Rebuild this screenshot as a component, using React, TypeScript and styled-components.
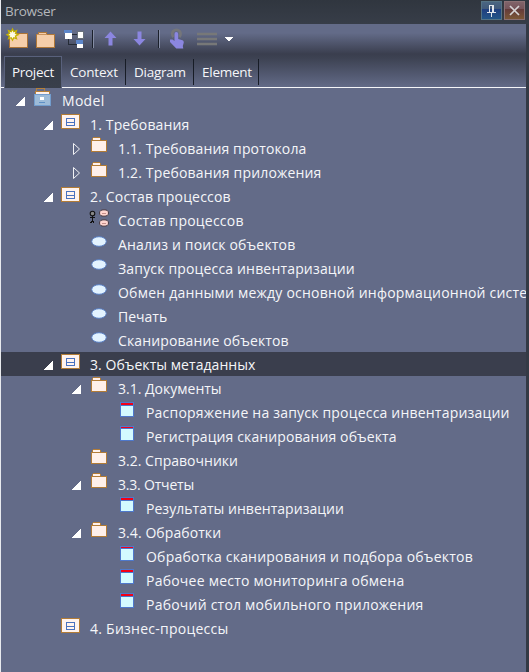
import React from 'react';
import styled, { createGlobalStyle } from 'styled-components';

const GlobalStyle = createGlobalStyle`
  * { box-sizing: border-box; }
  body { margin: 0; overflow: hidden; background: #303640; }
  svg { display: block; shape-rendering: crispEdges; flex: none; }
`;

const Panel = styled.div`
  width: 529px;
  height: 672px;
  display: flex;
  flex-direction: column;
  overflow: hidden;
  border-left: 1px solid #e8eaee;
  background: #343a45;
  color: #f5f6f9;
  font-family: 'Open Sans', 'Noto Sans', sans-serif;
  font-size: 14px;
`;

const TitleBar = styled.header`
  height: 24px;
  flex: none;
  display: flex;
  align-items: flex-start;
  padding: 1px 4px 0 4px;
  background: linear-gradient(#30363f, #373d48);
`;

const Title = styled.span`
  flex: 1;
  color: #b4b7bc;
  font-size: 13.5px;
  line-height: 20px;
  letter-spacing: -0.25px;
`;

const CaptionButton = styled.button<{ $kind: 'pin' | 'close' }>`
  width: 21px;
  height: 19px;
  margin-left: 2px;
  padding: 0;
  border: 1px solid ${p => (p.$kind === 'pin' ? '#557385' : '#8b7074')};
  background: ${p =>
    p.$kind === 'pin'
      ? 'linear-gradient(#4a6582 0, #41597a 42%, #203f80 43%, #245587 100%)'
      : 'linear-gradient(#80636a 0, #755359 42%, #643a3a 43%, #7b5737 100%)'};
`;

const Workspace = styled.div`
  width: 525px;
  flex: 1;
  overflow: hidden;
  background: #636b88;
`;

const Chrome = styled.div`
  height: 64px;
  display: flex;
  flex-direction: column;
  border-bottom: 1px solid #f4f5f8;
  background: linear-gradient(#636b88 0, #636b88 9px, #3a3e4e 30px, #3d4252 34px, #626a87 63px);
`;

const Toolbar = styled.div`
  height: 32px;
  flex: none;
  display: flex;
`;

const Tabs = styled.nav`
  height: 32px;
  flex: none;
  display: flex;
  padding-left: 3px;
`;

const Tab = styled.button<{ $width: number; $active?: boolean; $spacing: number }>`
  width: ${p => p.$width}px;
  height: ${p => (p.$active ? 32 : 26)}px;
  margin-top: ${p => (p.$active ? 0 : 3)}px;
  padding: ${p => (p.$active ? '0 0 2px 7px' : '0 0 1px 8px')};
  border: solid ${p => (p.$active ? '#59617c' : '#171c26')};
  border-width: ${p => (p.$active ? '1px 1px 0' : '0 1px 0 0')};
  background: ${p => (p.$active ? 'linear-gradient(#343a46, #393f4b)' : 'transparent')};
  color: #f5f6f9;
  font: inherit;
  font-size: 13.5px;
  letter-spacing: ${p => p.$spacing}px;
  text-align: left;
  white-space: nowrap;
`;

const Tree = styled.div`
  display: flex;
  flex-direction: column;
`;

const Row = styled.div<{ $level: number; $selected?: boolean }>`
  height: 24px;
  flex: none;
  display: flex;
  padding-left: ${p => 14 + 28 * p.$level}px;
  background: ${p => (p.$selected ? '#3a3e4d' : 'transparent')};
`;

const ArrowSlot = styled.span`
  width: 18px;
  height: 24px;
  flex: none;
`;

const IconSlot = styled.span<{ $shift: number }>`
  width: 29px;
  height: 24px;
  flex: none;
  padding-top: ${p => p.$shift}px;
`;

const Label = styled.span<{ $spacing: number }>`
  line-height: 25px;
  letter-spacing: ${p => p.$spacing}px;
  white-space: pre;
`;

const PinIcon = () => (
  <svg width="19" height="17">
    <path d="M7 3h5v7h2v1h-4v4H9v-4H5v-1h2zM8 4v6h2V4z" fill="#e0e4ea" fillRule="evenodd" />
  </svg>
);

const CloseIcon = () => (
  <svg width="19" height="17">
    <path d="M5 4l9 9M14 4l-9 9" stroke="#d6d4d6" strokeWidth="1.7" shapeRendering="auto" />
  </svg>
);

const ToolbarIcons = () => (
  <svg width="240" height="32">
    <path d="M8.500 9.500h18v14h-18z" fill="#f5ceaa" stroke="#ab7336" />
    <path d="M11.500 5l1.300 2.700 2.700-1-1 2.700 2.700 1.300-2.700 1.300 1 2.700-2.700-1-1.300 2.500-1.300-2.500-2.700 1 1-2.700-2.500-1.300 2.500-1.300-1-2.700 2.700 1z" fill="#fffbe4" stroke="#c4b000" strokeWidth="1.300" shapeRendering="auto" />
    <path d="M35.500 23.500v-13h2v-2h8v2h8v13z" fill="#f5ceaa" stroke="#b07839" />
    <path d="M36 10.500h10" stroke="#ca935e" />
    <path d="M67.500 14v6.500h8M71 10.500h5" stroke="#252b36" fill="none" />
    <path d="M64 7h7v8h-7zM76 7h6v7h-6zM76 17h6v7h-6z" fill="#fff" />
    <path d="M63 6h8v3h-8zM75 16h7v4h-7z" fill="#5d86ca" />
    <path d="M76 7h6v7h-6z" fill="none" stroke="#68707c" />
    <path d="M91.500 6v18M157.500 6v18" stroke="#1b202b" />
    <path d="M92.500 6v18M158.500 6v18" stroke="#858da5" />
    <path d="M109.500 7.500l6 6.500h-4v7.500h-4v-7.500h-4z" fill="#8b86e0" shapeRendering="auto" />
    <path d="M138.500 21.500l6-6.500h-4v-7.500h-4v7.500h-4z" fill="#8b86e0" shapeRendering="auto" />
    <path d="M172.500 13a4.200 4.200 0 1 1 5.800 0" fill="none" stroke="#75767a" strokeWidth="2.600" shapeRendering="auto" />
    <path d="M173.500 10q0-2 1.800-2t1.900 2v5l4.300 1.200q1.300.5 1.300 2.300l-1 3.500.5 2.500h-7l-6.300-6.500v-2.500h2.500l2 1.500z" fill="#8b86e0" shapeRendering="auto" />
    <path d="M196 8.800h20v2.500h-20zM196 13.800h20v2.500h-20zM196 18.700h20v2.500h-20z" fill="#777878" shapeRendering="auto" />
    <path d="M224 13h8v1h-8zM225 14h6v1h-6zM226 15h4v1h-4zM227 16h2v1h-2z" fill="#fff" />
  </svg>
);

type ArrowKind = 'open' | 'closed' | 'none';

const Arrow = ({ kind }: { kind: ArrowKind }) => (
  <svg width="18" height="24">
    {kind === 'open' && <path d="M10 8v10H0z" fill="#fff" />}
    {kind === 'closed' && <path d="M2.500 7.500v11l6-5.500z" fill="none" stroke="#f0f1f4" shapeRendering="auto" />}
  </svg>
);

type IconKind = 'model' | 'view' | 'folder' | 'diagram' | 'usecase' | 'class' | 'class-thin';

const NodeIcon = ({ kind }: { kind: IconKind }) => {
  switch (kind) {
    case 'model':
      return (
        <svg width="22" height="19">
          <path d="M2 3h14v4H2z" fill="#fff0ea" />
          <path d="M2.500 7V3.500h1V.500h8v3h5V7M3 3.500h9" fill="none" stroke="#b68039" />
          <path d="M1.500 6.500h16v11h-16z" fill="#9dbbd8" stroke="#729dce" />
          <path d="M7 9h4v3H7z" fill="#fff" />
          <path d="M6 14h6v1H6z" fill="#5f90c5" />
        </svg>
      );
    case 'view':
      return (
        <svg width="22" height="15">
          <path d="M.5.500h18v14H.5z" fill="#fff3ee" stroke="#b27c37" />
          <path d="M5.500 4.500h8v7h-8zM5.500 8h8" fill="none" stroke="#4972c0" />
        </svg>
      );
    case 'folder':
      return (
        <svg width="22" height="15">
          <path d="M4 1h8v3H4zM3 4h14v10H3z" fill="#fff0ea" />
          <path d="M2 3h16v1H2zM2 4h1v11H2zM17 4h1v11h-1zM3 14h14v1H3zM3 1h1v2H3zM4 0h7v1H4zM11 1h1v2h-1z" fill="#b27c37" />
        </svg>
      );
    case 'diagram':
      return (
        <svg width="22" height="19">
          <g fill="none" stroke="#111" strokeWidth="1.100">
            <circle cx="3.500" cy="4.500" r="2.300" fill="#888" shapeRendering="auto" />
            <path d="M3.500 7v5M1 8.500h5M3.500 11.500l-2 3M3.500 11.500l2 3" />
          </g>
          <g fill="#ffd5cf" stroke="#463a43" shapeRendering="auto">
            <ellipse cx="15" cy="4" rx="4.500" ry="3.200" />
            <ellipse cx="15" cy="14" rx="4.500" ry="3.200" />
          </g>
          <path d="M13 4.500h4M13 14.500h4" stroke="#c58f8a" />
        </svg>
      );
    case 'usecase':
      return (
        <svg width="22" height="11">
          <ellipse cx="10" cy="5.500" rx="7.300" ry="4.800" fill="#e3f3ff" stroke="#587fc4" shapeRendering="auto" />
        </svg>
      );
    default:
      return (
        <svg width="22" height="15">
          <path d="M3.500.500h13v14h-13z" fill="#d3faff" stroke="#4e78cc" />
          <path d={kind === 'class' ? 'M4 1h12v2H4z' : 'M4 1h12v1H4z'} fill="#f20017" />
          <path d={kind === 'class' ? 'M4 3.500h12' : 'M4 2.500h12'} stroke="#4e78cc" />
        </svg>
      );
  }
};

type TreeNode = {
  level: number;
  arrow: ArrowKind;
  icon: IconKind;
  shift: number;
  label: string;
  spacing: number;
  selected?: boolean;
};

const nodes: TreeNode[] = [
  { level: 0, arrow: 'open', icon: 'model', shift: 0, label: 'Model', spacing: 0.3 },
  { level: 1, arrow: 'open', icon: 'view', shift: 2, label: '1. Требования', spacing: 0.15 },
  { level: 2, arrow: 'closed', icon: 'folder', shift: 1, label: '1.1. Требования протокола', spacing: 0.14 },
  { level: 2, arrow: 'closed', icon: 'folder', shift: 2, label: '1.2. Требования приложения', spacing: 0.17 },
  { level: 1, arrow: 'open', icon: 'view', shift: 3, label: '2. Состав процессов', spacing: 0.17 },
  { level: 2, arrow: 'none', icon: 'diagram', shift: 1, label: 'Состав процессов', spacing: 0.22 },
  { level: 2, arrow: 'none', icon: 'usecase', shift: 4, label: 'Анализ и поиск объектов', spacing: 0.17 },
  { level: 2, arrow: 'none', icon: 'usecase', shift: 3, label: 'Запуск процесса инвентаризации', spacing: 0.17 },
  { level: 2, arrow: 'none', icon: 'usecase', shift: 4, label: 'Обмен данными между основной информационной систе', spacing: 0.22 },
  { level: 2, arrow: 'none', icon: 'usecase', shift: 4, label: 'Печать', spacing: 0 },
  { level: 2, arrow: 'none', icon: 'usecase', shift: 4, label: 'Сканирование объектов', spacing: 0.12 },
  { level: 1, arrow: 'open', icon: 'view', shift: 2, label: '3. Объекты метаданных', spacing: 0.05, selected: true },
  { level: 2, arrow: 'open', icon: 'folder', shift: 1, label: '3.1. Документы', spacing: 0 },
  { level: 3, arrow: 'none', icon: 'class', shift: 2, label: 'Распоряжение на запуск процесса инвентаризации', spacing: 0.2 },
  { level: 3, arrow: 'none', icon: 'class-thin', shift: 2, label: 'Регистрация сканирования объекта', spacing: 0.11 },
  { level: 2, arrow: 'none', icon: 'folder', shift: 1, label: '3.2. Справочники', spacing: 0.02 },
  { level: 2, arrow: 'open', icon: 'folder', shift: 1, label: '3.3. Отчеты', spacing: -0.2 },
  { level: 3, arrow: 'none', icon: 'class', shift: 1, label: 'Результаты инвентаризации', spacing: 0.03 },
  { level: 2, arrow: 'open', icon: 'folder', shift: 2, label: '3.4. Обработки', spacing: 0.08 },
  { level: 3, arrow: 'none', icon: 'class-thin', shift: 2, label: 'Обработка сканирования и подбора объектов', spacing: 0.22 },
  { level: 3, arrow: 'none', icon: 'class', shift: 1, label: 'Рабочее место мониторинга обмена', spacing: 0.23 },
  { level: 3, arrow: 'none', icon: 'class', shift: 1, label: 'Рабочий стол мобильного приложения', spacing: 0.22 },
  { level: 1, arrow: 'none', icon: 'view', shift: 2, label: '4. Бизнес-процессы', spacing: 0.25 },
];

export default function App() {
  return (
    <>
      <GlobalStyle />
      <Panel>
        <TitleBar>
          <Title>Browser</Title>
          <CaptionButton $kind="pin"><PinIcon /></CaptionButton>
          <CaptionButton $kind="close"><CloseIcon /></CaptionButton>
        </TitleBar>
        <Workspace>
          <Chrome>
            <Toolbar><ToolbarIcons /></Toolbar>
            <Tabs>
              <Tab $width={58} $active $spacing={-0.3}>Project</Tab>
              <Tab $width={64} $spacing={-0.2}>Context</Tab>
              <Tab $width={68} $spacing={-0.25}>Diagram</Tab>
              <Tab $width={65} $spacing={-0.25}>Element</Tab>
            </Tabs>
          </Chrome>
          <Tree>
            {nodes.map(n => (
              <Row key={n.label} $level={n.level} $selected={n.selected}>
                <ArrowSlot><Arrow kind={n.arrow} /></ArrowSlot>
                <IconSlot $shift={n.shift}><NodeIcon kind={n.icon} /></IconSlot>
                <Label $spacing={n.spacing}>{n.label}</Label>
              </Row>
            ))}
          </Tree>
        </Workspace>
      </Panel>
    </>
  );
}
